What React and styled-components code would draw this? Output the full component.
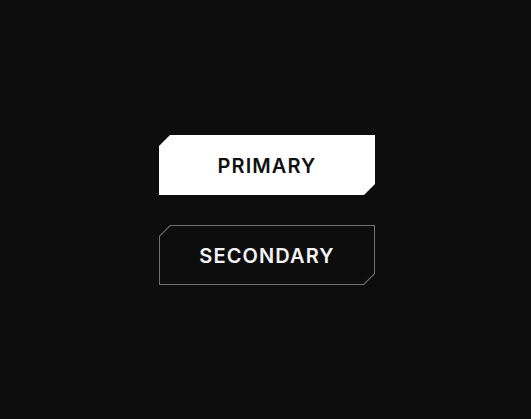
import React from "react";
import styled, { createGlobalStyle } from "styled-components";

const GlobalStyle = createGlobalStyle`
  html, body {
    margin: 0;
    padding: 0;
    background: #0d0d0d;
  }
`;

const cut = "11px";
const shape = `polygon(${cut} 0, 100% 0, 100% calc(100% - ${cut}), calc(100% - ${cut}) 100%, 0 100%, 0 ${cut})`;

const Page = styled.div`
  width: 100vw;
  height: 100vh;
  display: flex;
  flex-direction: column;
  align-items: center;
  justify-content: center;
  gap: 30px;
  padding-left: 3px;
  padding-top: 1px;
  box-sizing: border-box;
  font-family: "Inter", "Noto Sans", sans-serif;
`;

const Button = styled.button`
  position: relative;
  width: 216px;
  height: 60px;
  border: none;
  padding: 2px 0 0;
  cursor: pointer;
  display: flex;
  align-items: center;
  justify-content: center;
  font-family: inherit;
  font-size: 20px;
  font-weight: 600;
  letter-spacing: 1.1px;
  clip-path: ${shape};
  background: ${(p) => (p.$variant === "primary" ? "#ffffff" : "#707070")};
  color: ${(p) => (p.$variant === "primary" ? "#111111" : "#f4f4f4")};

  &::before {
    content: "";
    position: absolute;
    inset: 1px;
    display: ${(p) => (p.$variant === "primary" ? "none" : "block")};
    background: #0d0d0d;
    clip-path: polygon(10.6px 0, 100% 0, 100% calc(100% - 10.6px), calc(100% - 10.6px) 100%, 0 100%, 0 10.6px);
  }
`;

const Label = styled.span`
  position: relative;
`;

export default function App() {
  return (
    <>
      <GlobalStyle />
      <Page>
        <Button $variant="primary">
          <Label>PRIMARY</Label>
        </Button>
        <Button $variant="secondary">
          <Label>SECONDARY</Label>
        </Button>
      </Page>
    </>
  );
}
